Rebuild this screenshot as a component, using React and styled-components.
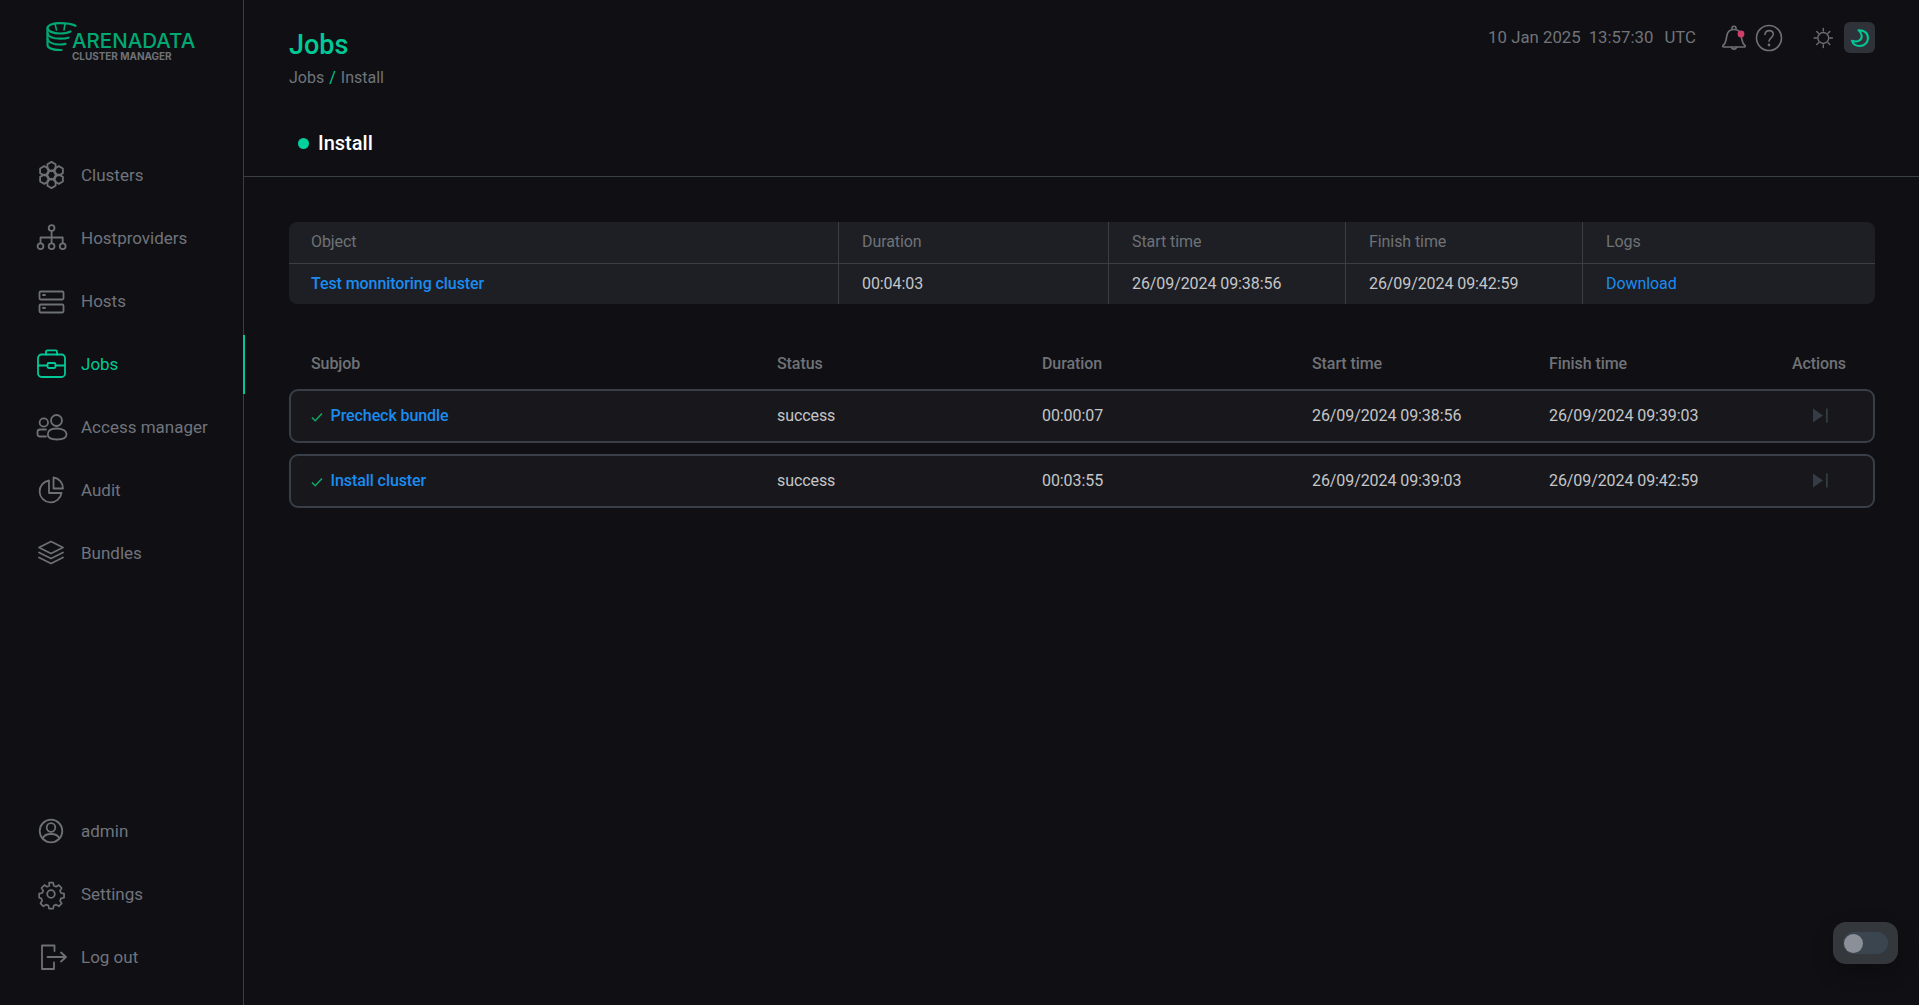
import React from "react";
import styled, { createGlobalStyle } from "styled-components";

const Global = createGlobalStyle`
  html, body { margin: 0; padding: 0; height: 100%; background: #100f13; overflow: hidden; }
  body { font-family: Roboto, "Liberation Sans", sans-serif; font-size: 16px; }
  * { box-sizing: border-box; }
`;

const Page = styled.div`
  display: flex;
  height: 1005px;
  background: #100f13;
`;

const Sidebar = styled.aside`
  width: 244px;
  flex: none;
  display: flex;
  flex-direction: column;
  border-right: 1px solid #3a3e45;
  padding-bottom: 17px;
`;

const LogoBlock = styled.div`
  height: 143px;
  flex: none;
  padding: 22px 0 0 46px;
  display: flex;
  align-items: flex-start;
`;

const LogoWords = styled.div`
  display: flex;
  flex-direction: column;
  margin-left: -5px;
  padding-top: 9px;
`;

const LogoName = styled.span`
  font-family: Inter, "Noto Sans", sans-serif;
  font-weight: 500;
  font-size: 20.5px;
  line-height: 20px;
  color: #00a873;
`;

const LogoSub = styled.span`
  font-family: Inter, "Noto Sans", sans-serif;
  font-weight: 700;
  font-size: 10px;
  line-height: 10px;
  letter-spacing: -0.05px;
  color: #6d7178;
  margin-top: 0;
`;

const NavList = styled.nav`
  display: flex;
  flex-direction: column;
`;

const BottomNav = styled(NavList)`
  margin-top: auto;
`;

const NavItem = styled.a`
  position: relative;
  display: flex;
  align-items: center;
  gap: 13px;
  height: 63px;
  padding-left: 36px;
  color: ${(p) => (p.$active ? "#00c997" : "#6f747d")};
  font-size: 17px;
  line-height: 20px;

  &::after {
    content: "";
    display: ${(p) => (p.$active ? "block" : "none")};
    position: absolute;
    right: -2px;
    top: 3px;
    width: 2px;
    height: 59px;
    background: #00c997;
  }
`;

const NavIconSvg = styled.svg`
  width: 32px;
  height: 32px;
  flex: none;
  fill: none;
  stroke: ${(p) => (p.$active ? "#00c997" : "#6d7075")};
  stroke-width: 1.8;
  stroke-linejoin: round;
  stroke-linecap: round;
`;

const Main = styled.main`
  flex: 1;
  min-width: 0;
  display: flex;
  flex-direction: column;
`;

const TopBar = styled.header`
  display: flex;
  justify-content: space-between;
  align-items: flex-start;
  height: 122px;
  padding: 22px 44px 0 45px;
`;

const TitleBlock = styled.div`
  display: flex;
  flex-direction: column;
`;

const PageTitle = styled.h1`
  margin: 0;
  color: #00c997;
  font-weight: 500;
  font-size: 27px;
  line-height: 47px;
`;

const Crumbs = styled.div`
  display: flex;
  gap: 5px;
  margin-top: -3px;
  font-size: 16px;
  line-height: 24px;
  color: #6f747b;
`;

const CrumbSep = styled.span`
  color: #00c997;
`;

const TopRight = styled.div`
  display: flex;
  align-items: center;
  height: 31px;
`;

const Clock = styled.div`
  display: flex;
  gap: 8px;
  color: #6f747b;
  font-size: 16.8px;
  margin-right: 23px;
  padding-bottom: 1px;
`;

const ClockZone = styled.span`
  margin-left: 3px;
`;

const TopIconSvg = styled.svg`
  flex: none;
  width: ${(p) => p.$w || 30}px;
  height: 30px;
  fill: none;
  stroke: #6e7074;
  stroke-width: 1.6;
  stroke-linecap: round;
  stroke-linejoin: round;
`;

const IconGroup = styled.div`
  display: flex;
  align-items: center;
  gap: 5px;
  margin-right: 28px;
`;

const ThemeGroup = styled.div`
  display: flex;
  align-items: center;
  gap: 6px;
`;

const MoonButton = styled.div`
  width: 31px;
  height: 31px;
  border-radius: 6px;
  background: #2f3339;
  display: flex;
  align-items: center;
  justify-content: center;
`;

const TabRow = styled.div`
  height: 55px;
  flex: none;
  border-bottom: 1px solid #3a3e45;
  padding: 0 0 12px 54px;
  display: flex;
  align-items: center;
  gap: 9px;
`;

const StatusDot = styled.span`
  width: 11px;
  height: 11px;
  border-radius: 50%;
  background: #00d09c;
`;

const TabTitle = styled.span`
  color: #fff;
  font-weight: 500;
  font-size: 20px;
  line-height: 24px;
`;

const Content = styled.div`
  padding: 45px 44px 0 45px;
  letter-spacing: -0.08px;
`;

const SummaryCard = styled.div`
  background: #1d1f24;
  border-radius: 8px;
  overflow: hidden;
`;

const SummaryRow = styled.div`
  display: grid;
  grid-template-columns: 549px 270px 237px 237px 1fr;
  height: ${(p) => (p.$head ? "42px" : "40px")};
  border-bottom: ${(p) => (p.$head ? "1px solid #3a3e45" : "none")};
`;

const SummaryCell = styled.div`
  display: flex;
  align-items: center;
  padding-left: ${(p) => (p.$first ? 22 : 23)}px;
  padding-bottom: 2px;
  border-left: ${(p) => (p.$first ? "none" : "1px solid #3a3e45")};
  color: ${(p) => (p.$head ? "#6f7277" : "#c4c6c9")};
  font-size: 16px;
`;

const Link = styled.a`
  color: #1a8cf0;
  font-weight: ${(p) => (p.$plain ? 400 : 500)};
`;

const SubHeader = styled.div`
  display: grid;
  grid-template-columns: 466px 265px 270px 237px 243px 1fr;
  align-items: center;
  height: 40px;
  margin-top: 39px;
  padding: 0 0 0 22px;
  margin-bottom: 6px;
  color: #6f7277;
  font-size: 16px;
  font-weight: 500;
`;

const Rows = styled.div`
  display: flex;
  flex-direction: column;
  gap: 11px;
`;

const SubRow = styled.div`
  display: grid;
  grid-template-columns: 466px 265px 270px 237px 243px 1fr;
  align-items: center;
  height: 54px;
  padding-left: 20px;
  padding-bottom: 1px;
  border: 2px solid #383f48;
  border-radius: 9px;
  background: #18181c;
  color: #c4c6c9;
  font-size: 16px;
`;

const NameCell = styled.div`
  display: flex;
  align-items: center;
  gap: 7.500px;
`;

const CheckSvg = styled.svg`
  width: 12px;
  height: 10px;
  margin-top: 3px;
  fill: none;
  stroke: #0fa968;
  stroke-width: 1.5;
`;

const ActionCell = styled.div`
  display: flex;
  padding-left: 21px;
`;

const SkipSvg = styled.svg`
  width: 15px;
  height: 15px;
  fill: #353c44;
`;

const FloatToggle = styled.div`
  position: absolute;
  left: 1833px;
  top: 922px;
  width: 65px;
  height: 42px;
  border-radius: 13px;
  background: #34373c;
  display: flex;
  align-items: center;
  justify-content: center;
  box-shadow: 0 8px 20px rgba(0, 0, 0, 0.25);
`;

const ToggleTrack = styled.div`
  width: 45px;
  height: 22px;
  border-radius: 11px;
  background: #3a4550;
  display: flex;
  align-items: center;
  padding-left: 1px;
`;

const ToggleThumb = styled.div`
  width: 19px;
  height: 19px;
  border-radius: 50%;
  background: #8a8f98;
`;

/* ---------- drawings ---------- */

const hex = (cx, cy, r = 4.7) => {
  const pts = [];
  for (let i = 0; i < 6; i++) {
    const a = (Math.PI / 3) * i + Math.PI / 6;
    pts.push(`${(cx + r * Math.cos(a)).toFixed(2)},${(cy + r * Math.sin(a)).toFixed(2)}`);
  }
  return pts.join(" ");
};

const Icon = ({ children, active }) => (
  <NavIconSvg viewBox="0 0 32 32" $active={active}>
    {children}
  </NavIconSvg>
);

const ClusterIcon = () => (
  <Icon>
    {[
      [15.500, 16],
      [15.500, 7.600],
      [15.500, 24.400],
      [8.200, 11.800],
      [22.800, 11.800],
      [8.200, 20.200],
      [22.800, 20.200],
    ].map(([x, y]) => (
      <polygon key={`${x}-${y}`} points={hex(x, y)} />
    ))}
  </Icon>
);

const HostproviderIcon = () => (
  <Icon>
    <circle cx="15.600" cy="6" r="2.900" />
    <path d="M15.600 9v6.500M4.500 21v-5.500h22.200V21M15.600 15.500V21" />
    <circle cx="4.500" cy="24.300" r="2.900" />
    <circle cx="15.600" cy="24.300" r="2.900" />
    <circle cx="26.700" cy="24.300" r="2.900" />
  </Icon>
);

const HostsIcon = () => (
  <Icon>
    <rect x="3.500" y="6.500" width="24" height="8" rx="1.200" />
    <rect x="3.500" y="19.500" width="24" height="8" rx="1.200" />
    <path d="M7 10h2M7 23h2" />
  </Icon>
);

const JobsIcon = () => (
  <Icon active>
    <rect x="2" y="6.500" width="27" height="22.500" rx="3.500" />
    <path d="M10 6.500V3.800a1.500 1.500 0 0 1 1.500-1.500h8a1.500 1.500 0 0 1 1.500 1.500v2.700" />
    <path d="M2 17.500h9.500M19.500 17.500H29" />
    <rect x="11.500" y="15" width="8" height="5" rx="1.200" />
  </Icon>
);

const AccessIcon = () => (
  <Icon>
    <circle cx="7.800" cy="11.500" r="4.200" />
    <circle cx="20.500" cy="9.500" r="5.500" />
    <path d="M10 18.500H4a2.500 2.500 0 0 0-2.500 2.500v2a2.500 2.500 0 0 0 2.500 2.500h6" />
    <path d="M11.800 23.500c0-4 3-6 8.700-6s10 2 10 6c0 3.500-3.500 5-9.500 5s-9.200-1.500-9.200-5z" />
  </Icon>
);

const AuditIcon = () => (
  <Icon>
    <path d="M13 6.500a11 11 0 1 0 12.500 12.500H13z" />
    <path d="M17.500 3.500a11 11 0 0 1 9.500 11h-9.500z" />
  </Icon>
);

const BundlesIcon = () => (
  <Icon>
    <path d="M15 4.500l12 6-12 6-12-6z" />
    <path d="M3 15.500l12 6 12-6" />
    <path d="M3 20.500l12 6 12-6" />
  </Icon>
);

const AdminIcon = () => (
  <Icon>
    <circle cx="15" cy="16" r="11.300" />
    <circle cx="15" cy="12.500" r="4.300" />
    <path d="M6.700 23.500c1-3 4-4.500 8.300-4.500s7.300 1.500 8.300 4.500" />
  </Icon>
);

const SettingsIcon = () => (
  <Icon>
    <circle cx="15" cy="16" r="3.800" />
    <path d="M13.800 4h4.400l.7 3.300 2.500 1 2.800-1.800 3.100 3.100-1.800 2.800 1 2.500 3.300.7v4.400l-3.300.7-1 2.500 1.800 2.800-3.100 3.100-2.800-1.800-2.500 1-.7 3.300h-4.400l-.7-3.300-2.500-1-2.800 1.800-3.100-3.100 1.800-2.800-1-2.500L3.300 20v-4.400l3.300-.7 1-2.500-1.800-2.800 3.100-3.100 2.800 1.800 2.500-1z" transform="translate(15 16) scale(.94) translate(-15.900 -16)" />
  </Icon>
);

const LogoutIcon = () => (
  <Icon>
    <path d="M18.500 4.500H6v23.500h12v-6.500M18.500 4.500v5.500" />
    <path d="M11.500 16h18.500M25 11.500l5 4.500-5 4.500" />
  </Icon>
);

const DrumLogo = () => (
  <svg width="31" height="30" viewBox="0 0 31 30" fill="none" stroke="#00a873" strokeWidth="2.200" strokeLinecap="round" strokeLinejoin="round">
    <path d="M29.500 3.800C26 2 20 1.200 14 1.200 7 1.200 1.500 3 1.500 6s5.500 5.500 12.500 5.500c4.500 0 8-.7 10.500-2" />
    <path d="M1.500 6v17c0 3.500 6 5.200 14 5" />
    <path d="M1.500 11.500c1 3.500 6.500 5.200 13 5.200 3 0 6-.3 8-1" />
    <path d="M1.500 17c1 3.500 6.500 5.500 12.500 5.500 2 0 4-.2 5.500-.6" />
    <path d="M9 1.800L10.500 8M19 1.800L18 8" strokeWidth="1.600" />
  </svg>
);

const Check = () => (
  <CheckSvg viewBox="0 0 12 10">
    <path d="M1 5.500l3.200 3.200L11 1.500" />
  </CheckSvg>
);

const Skip = () => (
  <SkipSvg viewBox="0 0 15 15">
    <path d="M0 .500v14l10-7z" />
    <rect x="13" y="0.500" width="1.700" height="14" />
  </SkipSvg>
);

const mainNav = [
  ["Clusters", ClusterIcon],
  ["Hostproviders", HostproviderIcon],
  ["Hosts", HostsIcon],
  ["Jobs", JobsIcon, true],
  ["Access manager", AccessIcon],
  ["Audit", AuditIcon],
  ["Bundles", BundlesIcon],
];

const lowerNav = [
  ["admin", AdminIcon],
  ["Settings", SettingsIcon],
  ["Log out", LogoutIcon],
];

const subjobs = [
  ["Precheck bundle", "success", "00:00:07", "26/09/2024 09:38:56", "26/09/2024 09:39:03"],
  ["Install cluster", "success", "00:03:55", "26/09/2024 09:39:03", "26/09/2024 09:42:59"],
];

export default function App() {
  return (
    <Page>
      <Global />
      <Sidebar>
        <LogoBlock>
          <DrumLogo />
          <LogoWords>
            <LogoName>ARENADATA</LogoName>
            <LogoSub>CLUSTER MANAGER</LogoSub>
          </LogoWords>
        </LogoBlock>
        <NavList>
          {mainNav.map(([label, Ico, active]) => (
            <NavItem key={label} $active={active}>
              <Ico />
              {label}
            </NavItem>
          ))}
        </NavList>
        <BottomNav>
          {lowerNav.map(([label, Ico]) => (
            <NavItem key={label}>
              <Ico />
              {label}
            </NavItem>
          ))}
        </BottomNav>
      </Sidebar>
      <Main>
        <TopBar>
          <TitleBlock>
            <PageTitle>Jobs</PageTitle>
            <Crumbs>
              <span>Jobs</span>
              <CrumbSep>/</CrumbSep>
              <span>Install</span>
            </Crumbs>
          </TitleBlock>
          <TopRight>
            <Clock>
              <span>10 Jan 2025</span>
              <span>13:57:30</span>
              <ClockZone>UTC</ClockZone>
            </Clock>
            <IconGroup>
              <TopIconSvg viewBox="0 0 30 30">
                <path d="M4 22.500c1.500-1 2.500-2.800 3-5.500l1-5c.7-3.500 3.500-5.500 7-5.500s6.300 2 7 5.500l1 5c.5 2.700 1.500 4.500 3 5.500.6.800.2 1.500-.5 1.500H4.500c-.7 0-1.100-.7-.5-1.500z" />
                <path d="M13 6.500V5.200a2 2 0 0 1 4 0v1.300M12.500 24.500a2.600 2.300 0 0 0 5 0" />
                <circle cx="22" cy="11" r="3.400" fill="#cf3f6a" stroke="none" />
              </TopIconSvg>
              <TopIconSvg viewBox="0 0 30 30">
                <circle cx="15" cy="15" r="12.500" />
                <path d="M11 11.500c.3-2.500 2-3.900 4.200-3.900 2.400 0 4.100 1.500 4.100 3.700 0 3.500-4.300 3.500-4.300 7" />
                <circle cx="15" cy="22" r=".6" />
              </TopIconSvg>
            </IconGroup>
            <ThemeGroup>
              <TopIconSvg viewBox="0 0 30 30" $w="26">
                <circle cx="13" cy="15" r="6.300" />
                <path d="M13 4v3M13 23v3M2.500 15h3M20.500 15h3M5.500 7.500l2 2M18.500 20.500l2 2M20.500 7.500l-2 2M7.500 20.500l-2 2" />
              </TopIconSvg>
              <MoonButton>
                <svg width="20" height="20" viewBox="0 0 20 20" fill="none" stroke="#00c997" strokeWidth="2" strokeLinecap="round" strokeLinejoin="round">
                  <path d="M8.500 2.200c5.500-.5 9.500 3 9.500 7.800 0 4.700-3.800 8-8.300 8-3.800 0-6.700-2-7.700-5.200 5.500 1.800 10.200-.3 9.700-5.200-.2-2.200-1.400-4-3.200-5.400z" />
                </svg>
              </MoonButton>
            </ThemeGroup>
          </TopRight>
        </TopBar>
        <TabRow>
          <StatusDot />
          <TabTitle>Install</TabTitle>
        </TabRow>
        <Content>
          <SummaryCard>
            <SummaryRow $head>
              {["Object", "Duration", "Start time", "Finish time", "Logs"].map((h, i) => (
                <SummaryCell key={h} $head $first={i === 0}>
                  {h}
                </SummaryCell>
              ))}
            </SummaryRow>
            <SummaryRow>
              <SummaryCell $first>
                <Link>Test monnitoring cluster</Link>
              </SummaryCell>
              <SummaryCell>00:04:03</SummaryCell>
              <SummaryCell>26/09/2024 09:38:56</SummaryCell>
              <SummaryCell>26/09/2024 09:42:59</SummaryCell>
              <SummaryCell>
                <Link $plain>Download</Link>
              </SummaryCell>
            </SummaryRow>
          </SummaryCard>
          <SubHeader>
            <span>Subjob</span>
            <span>Status</span>
            <span>Duration</span>
            <span>Start time</span>
            <span>Finish time</span>
            <span>Actions</span>
          </SubHeader>
          <Rows>
            {subjobs.map(([name, status, dur, start, end]) => (
              <SubRow key={name}>
                <NameCell>
                  <Check />
                  <Link>{name}</Link>
                </NameCell>
                <span>{status}</span>
                <span>{dur}</span>
                <span>{start}</span>
                <span>{end}</span>
                <ActionCell>
                  <Skip />
                </ActionCell>
              </SubRow>
            ))}
          </Rows>
        </Content>
      </Main>
      <FloatToggle>
        <ToggleTrack>
          <ToggleThumb />
        </ToggleTrack>
      </FloatToggle>
    </Page>
  );
}
